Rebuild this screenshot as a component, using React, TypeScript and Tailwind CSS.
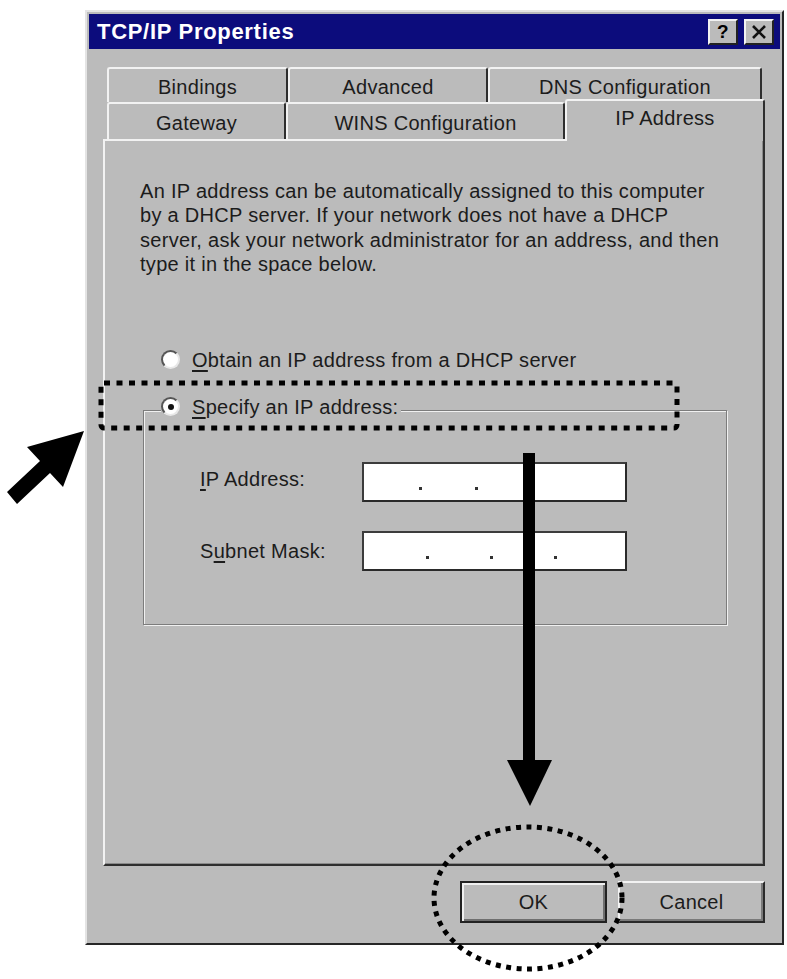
import React from 'react';

const face = 'bg-[#bbbbbb]';

function Tab({ label, w, selected = false }: { label: string; w: string; selected?: boolean }) {
  if (selected) {
    return (
      <div
        className={`${w} h-[42px] -mt-[3px] relative z-10 ${face} rounded-t-[3px] border-t-2 border-l-2 border-r-2 border-t-[#f2f2f2] border-l-[#f2f2f2] border-r-[#2e2e2e] flex items-center justify-center pb-[6px]`}
      >
        {label}
      </div>
    );
  }
  return (
    <div
      className={`${w} h-full ${face} rounded-t-[3px] border-t-2 border-l-2 border-r-2 border-t-[#f2f2f2] border-l-[#f2f2f2] border-r-[#2e2e2e] flex items-center justify-center pt-[2px]`}
    >
      {label}
    </div>
  );
}

function Radio({ checked = false }: { checked?: boolean }) {
  return (
    <span className="w-[19px] h-[19px] rounded-full bg-white border-2 border-t-[#555] border-l-[#555] border-r-[#e8e8e8] border-b-[#e8e8e8] flex items-center justify-center shrink-0">
      {checked && <span className="w-[6px] h-[6px] rounded-full bg-[#111]" />}
    </span>
  );
}

function IpField({ pad, gap }: { pad: string; gap: string }) {
  return (
    <div
      className={`w-[265px] h-[40px] bg-white border-2 border-t-[#3c3c3c] border-l-[#3c3c3c] border-r-[#2a2a2a] border-b-[#2a2a2a] flex items-end pb-[10px] ${pad} ${gap}`}
    >
      <span className="w-[3px] h-[3px] bg-[#333]" />
      <span className="w-[3px] h-[3px] bg-[#333]" />
      <span className="w-[3px] h-[3px] bg-[#333]" />
    </div>
  );
}

function Button({ label, isDefault = false }: { label: string; isDefault?: boolean }) {
  return (
    <div
      className={`w-[147px] h-[42px] ${face} flex items-center justify-center border-2 ${
        isDefault
          ? 'border-[#222] shadow-[inset_2px_2px_0_#efefef,inset_-2px_-2px_0_#6f6f6f]'
          : 'border-t-[#f2f2f2] border-l-[#f2f2f2] border-r-[#2a2a2a] border-b-[#2a2a2a] shadow-[inset_-2px_-2px_0_#7a7a7a]'
      }`}
    >
      {label}
    </div>
  );
}

export default function App() {
  return (
    <div className="relative w-[787px] h-[979px] bg-white overflow-hidden font-['Liberation_Sans',Arial,sans-serif] text-[20px] tracking-[0.3px] text-[#1c1c1c]">
      <div className="pl-[85px] pt-[10px]">
        <div
          className={`w-[699px] h-[935px] ${face} border-2 border-t-[#e4e4e4] border-l-[#e4e4e4] border-r-[#262626] border-b-[#262626] p-[2px] flex flex-col`}
        >
          {/* title bar */}
          <div className="h-[35px] bg-[#0c0c7c] flex items-center justify-between pl-[8px] pr-[6px]">
            <span className="text-white font-bold text-[22px] tracking-[0.7px]">TCP/IP Properties</span>
            <div className="flex gap-[6px]">
              <div className={`w-[30px] h-[26px] ${face} border-2 border-t-[#f2f2f2] border-l-[#f2f2f2] border-r-[#222] border-b-[#222] flex items-center justify-center font-bold text-[19px] leading-none text-black`}>
                ?
              </div>
              <div className={`w-[30px] h-[26px] ${face} border-2 border-t-[#f2f2f2] border-l-[#f2f2f2] border-r-[#222] border-b-[#222] flex items-center justify-center`}>
                <svg width="16" height="14" viewBox="0 0 16 14">
                  <path d="M2 1 L14 13 M14 1 L2 13" stroke="#111" strokeWidth="2.6" />
                </svg>
              </div>
            </div>
          </div>

          {/* tabs + panel */}
          <div className="mt-[18px] ml-[14px] w-[662px] flex flex-col">
            <div className="flex h-[35px] ml-[4px]">
              <Tab label="Bindings" w="w-[181px]" />
              <Tab label="Advanced" w="w-[200px]" />
              <Tab label="DNS Configuration" w="w-[274px]" />
            </div>
            <div className="flex items-start h-[37px] ml-[4px]">
              <Tab label="Gateway" w="w-[179px]" />
              <Tab label="WINS Configuration" w="w-[279px]" />
              <Tab label="IP Address" w="w-[200px]" selected />
            </div>

            <div className="h-[727px] border-2 border-t-[#f2f2f2] border-l-[#f2f2f2] border-r-[#2e2e2e] border-b-[#2e2e2e] shadow-[inset_-1px_-1px_0_#8a8a8a] pt-[38px] pl-[35px]">
              <p className="leading-[24.4px] whitespace-nowrap">
                An IP address can be automatically assigned to this computer
                <br />
                by a DHCP server. If your network does not have a DHCP
                <br />
                server, ask your network administrator for an address, and then
                <br />
                type it in the space below.
              </p>

              <div className="mt-[70px] pl-[21px] h-[26px] flex items-center gap-[12px]">
                <Radio />
                <span>
                  <span className="underline underline-offset-[3px]">O</span>btain an IP address from a DHCP server
                </span>
              </div>

              <fieldset className="mt-[21px] ml-[3px] w-[584px] border border-[#7c7c7c] shadow-[inset_1px_1px_0_#f0f0f0,1px_1px_0_#f0f0f0] pb-[53px]">
                <legend className={`ml-[17px] pr-[3px] h-[34px] ${face} flex items-start`}>
                  <span className="h-[26px] flex items-center gap-[12px]">
                    <Radio checked />
                    <span>
                      <span className="underline underline-offset-[3px]">S</span>pecify an IP address:
                    </span>
                  </span>
                </legend>
                <div className="pt-[34px] pl-[56px] grid grid-cols-[162px_265px] gap-y-[29px] items-center">
                  <span className="-mt-[5px]">
                    <span className="underline underline-offset-[3px]">I</span>P Address:
                  </span>
                  <IpField pad="pl-[55px]" gap="gap-[53px]" />
                  <span>
                    S<span className="underline underline-offset-[3px]">u</span>bnet Mask:
                  </span>
                  <IpField pad="pl-[62px]" gap="gap-[61px]" />
                </div>
              </fieldset>
            </div>
          </div>

          {/* buttons */}
          <div className="mt-[15px] pr-[15px] flex justify-end gap-[11px]">
            <Button label="OK" isDefault />
            <Button label="Cancel" />
          </div>
        </div>
      </div>

      {/* annotations drawn over the screenshot */}
      <svg className="absolute inset-0 pointer-events-none" width="787" height="979" viewBox="0 0 787 979">
        <rect x="101" y="383" width="576" height="45" rx="3" fill="none" stroke="#000" strokeWidth="5" strokeDasharray="6 6.5" />
        <polygon points="84,431 63,487 50,473 17,504 7,492 40,461 27,447" fill="#000" />
        <rect x="523" y="453" width="12" height="310" fill="#000" />
        <polygon points="507,760 552,760 530,806" fill="#000" />
        <ellipse cx="528" cy="898" rx="94" ry="71" fill="none" stroke="#000" strokeWidth="5" strokeDasharray="5 5.5" />
      </svg>
    </div>
  );
}
